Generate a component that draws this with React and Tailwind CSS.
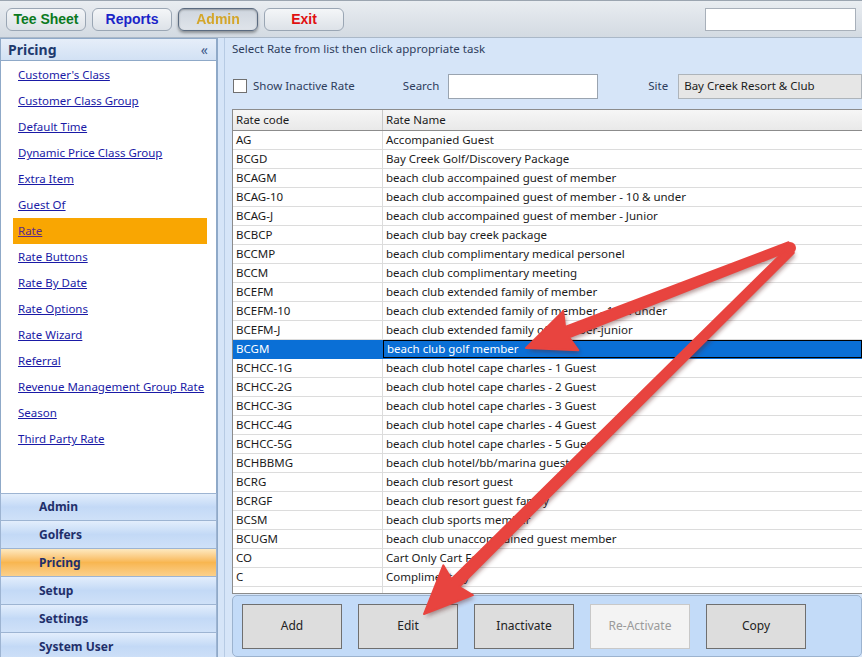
import React from "react";

const rates = [
  ["AG", "Accompanied Guest"],
  ["BCGD", "Bay Creek Golf/Discovery Package"],
  ["BCAGM", "beach club accompained guest of member"],
  ["BCAG-10", "beach club accompained guest of member - 10 & under"],
  ["BCAG-J", "beach club accompained guest of member - Junior"],
  ["BCBCP", "beach club bay creek package"],
  ["BCCMP", "beach club complimentary medical personel"],
  ["BCCM", "beach club complimentary meeting"],
  ["BCEFM", "beach club extended family of member"],
  ["BCEFM-10", "beach club extended family of member - 10 & under"],
  ["BCEFM-J", "beach club extended family of member-junior"],
  ["BCGM", "beach club golf member"],
  ["BCHCC-1G", "beach club hotel cape charles - 1 Guest"],
  ["BCHCC-2G", "beach club hotel cape charles - 2 Guest"],
  ["BCHCC-3G", "beach club hotel cape charles - 3 Guest"],
  ["BCHCC-4G", "beach club hotel cape charles - 4 Guest"],
  ["BCHCC-5G", "beach club hotel cape charles - 5 Guest"],
  ["BCHBBMG", "beach club hotel/bb/marina guest"],
  ["BCRG", "beach club resort guest"],
  ["BCRGF", "beach club resort guest family"],
  ["BCSM", "beach club sports member"],
  ["BCUGM", "beach club unaccompained guest member"],
  ["CO", "Cart Only Cart Fee"],
  ["C", "Complimentary"],
  ["", ""],
];

const links = [
  "Customer's Class",
  "Customer Class Group",
  "Default Time",
  "Dynamic Price Class Group",
  "Extra Item",
  "Guest Of",
  "Rate",
  "Rate Buttons",
  "Rate By Date",
  "Rate Options",
  "Rate Wizard",
  "Referral",
  "Revenue Management Group Rate",
  "Season",
  "Third Party Rate",
];

const sections = ["Admin", "Golfers", "Pricing", "Setup", "Settings", "System User"];

// red annotation arrow, built as a polygon from tail to tip
const arrowPoints = (x1, y1, x2, y2) => {
  const dx = x2 - x1;
  const dy = y2 - y1;
  const len = Math.hypot(dx, dy);
  const ux = dx / len;
  const uy = dy / len;
  const nx = -uy;
  const ny = ux;
  const head = 44;
  const hw = 21;
  const sw = 5.5;
  const tw = 4;
  const bx = x2 - ux * head;
  const by = y2 - uy * head;
  const pts = [
    [x1 + nx * tw, y1 + ny * tw],
    [bx + nx * sw, by + ny * sw],
    [bx + nx * hw - ux * 4, by + ny * hw - uy * 4],
    [x2, y2],
    [bx - nx * hw - ux * 4, by - ny * hw - uy * 4],
    [bx - nx * sw, by - ny * sw],
    [x1 - nx * tw, y1 - ny * tw],
  ];
  return pts.map((p) => p.join(",")).join(" ");
};

const Arrows = () => {
  const a1 = arrowPoints(790, 246, 526, 348);
  const a2 = arrowPoints(791, 250, 424, 614);
  return (
    <svg className="absolute inset-0 pointer-events-none" width="862" height="657" viewBox="0 0 862 657">
      <defs>
        <filter id="sh" x="-20%" y="-20%" width="140%" height="140%">
          <feGaussianBlur stdDeviation="2" />
        </filter>
      </defs>
      <g transform="translate(2,3)" fill="#5a2020" opacity="0.45" filter="url(#sh)">
        <polygon points={a1} />
        <polygon points={a2} />
      </g>
      <g fill="#e8443f" stroke="#e8443f" strokeWidth="2" strokeLinejoin="round">
        <polygon points={a1} />
        <polygon points={a2} />
        <circle cx="790" cy="248" r="5" />
      </g>
    </svg>
  );
};

const TopButton = ({ label, color, pressed }) => (
  <button
    className={`w-[80px] h-[23px] rounded-[6px] border text-[14px] font-bold font-['Liberation_Sans',Arial,sans-serif] ${
      pressed
        ? "border-[#5b6b80] bg-gradient-to-b from-[#cfd6df] to-[#dfe4ea] shadow-[inset_0_1px_2px_rgba(0,0,0,0.3),0_2px_3px_rgba(0,0,0,0.35)]"
        : "border-[#9aa6b4] bg-gradient-to-b from-[#f4f6f8] to-[#dde2e8]"
    }`}
    style={{ color }}
  >
    {pressed ? <span className="blur-[0.6px]">{label}</span> : label}
  </button>
);

const ActionButton = ({ label, disabled }) => (
  <button
    className={`w-[100px] h-[45px] border text-[12px] ${
      disabled ? "bg-[#f3f3f3] border-[#c8c8c8] text-[#9a9a9a]" : "bg-[#dddddd] border-[#6f6f6f] text-[#222]"
    }`}
  >
    {label}
  </button>
);

export default function App() {
  return (
    <div className="relative w-[862px] h-[657px] overflow-hidden bg-[#d6e5f8] font-['Noto_Sans','Open_Sans',sans-serif] text-[11.5px]">
      {/* TOOLBAR */}
      <div className="h-[38px] flex items-center gap-[6px] px-[6px] border-t border-[#9ba5b0] border-b border-b-[#aab8c8] bg-gradient-to-b from-[#e9edf1] to-[#d3dae2]">
        <TopButton label="Tee Sheet" color="#0b7a1e" />
        <TopButton label="Reports" color="#1a24c8" />
        <TopButton label="Admin" color="#d4a62a" pressed />
        <TopButton label="Exit" color="#e01010" />
        <div className="ml-auto w-[151px] h-[23px] bg-white border border-[#a8b0ba]" />
      </div>

      <div className="flex h-[619px]">
        {/* LEFT PANEL */}
        <div className="w-[218px] flex flex-col border-r border-[#8fa9c8]">
          <div className="h-[24px] flex items-center justify-between pl-[7px] pr-[8px] border border-[#8fa9c8] bg-gradient-to-b from-[#e6eef9] to-[#d2e1f4]">
            <span className="text-[14px] font-bold text-[#1e3a6e]">Pricing</span>
            <span className="text-[14px] text-[#3c5a8a] leading-none">«</span>
          </div>
          <div className="h-[432px] shrink-0 bg-white border-x border-[#8fa9c8] pt-[1px] flex flex-col text-[11.5px]">
            {links.map((l) => (
              <div
                key={l}
                className={`h-[26px] shrink-0 flex items-center ml-[12px] mr-[9px] pl-[5px] ${l === "Rate" ? "bg-[#f9a602]" : ""}`}
              >
                <span className={`underline ${l === "Rate" ? "text-[#5a2a8a]" : "text-[#1a1aa6]"}`}>{l}</span>
              </div>
            ))}
          </div>
          <div className="flex flex-col">
            {sections.map((s) => (
              <div
                key={s}
                className={`h-[28px] shrink-0 flex items-center pl-[38px] border border-t-0 border-[#9db4d2] first:border-t font-bold text-[12px] text-[#1f2f6a] ${
                  s === "Pricing"
                    ? "bg-gradient-to-b from-[#fde9c0] via-[#f8b650] to-[#fbd08a]"
                    : "bg-gradient-to-b from-[#e3eefc] via-[#c3d9f6] to-[#cfe1f8]"
                }`}
              >
                {s}
              </div>
            ))}
          </div>
        </div>

        {/* SPLITTER */}
        <div className="w-[7px] bg-[#d6e5f8] border-r border-[#b7cbe4]" />

        {/* RIGHT PANEL */}
        <div className="flex-1 flex flex-col pl-[7px] text-[#1d2a44]">
          <div className="h-[21px] flex items-center text-[#2e3d5c]">Select Rate from list then click appropriate task</div>
          <div className="h-[50px] flex items-center pt-[4px]">
            <div className="w-[14px] h-[14px] bg-white border border-[#707070] ml-[1px]" />
            <span className="ml-[6px] text-[#2e3d5c]">Show Inactive Rate</span>
            <span className="ml-[48px] text-[#2e3d5c]">Search</span>
            <div className="ml-[9px] w-[150px] h-[25px] bg-white border border-[#9aa4b0]" />
            <span className="ml-[50px] text-[#2e3d5c]">Site</span>
            <div className="ml-[10px] flex-1 h-[25px] flex items-center pl-[5px] bg-[#e6e6e6] border border-[#aeb4ba] text-[#1b1b1b]">
              Bay Creek Resort &amp; Club
            </div>
          </div>

          {/* TABLE */}
          <div className="h-[485px] bg-white border border-[#8c8c8c] border-r-0 overflow-hidden">
            <div className="h-[21px] flex border-b border-[#8c8c8c] bg-gradient-to-b from-[#f6f6f6] to-[#e9e9e9] text-[#1b1b1b]">
              <div className="w-[150px] flex items-center pl-[3px] border-r border-[#c8c8c8]">Rate code</div>
              <div className="flex-1 flex items-center pl-[3px]">Rate Name</div>
            </div>
            {rates.map(([code, name], i) => {
              const sel = code === "BCGM";
              return (
                <div
                  key={i}
                  className={`h-[19px] flex border-b ${sel ? "bg-[#0a6fd6] text-white border-[#0a6fd6]" : "border-[#dcdcdc] text-[#1b1b1b]"}`}
                >
                  <div className={`w-[150px] flex items-center pl-[3px] border-r ${sel ? "border-[#0a6fd6]" : "border-[#dcdcdc]"}`}>{code}</div>
                  <div className={`flex-1 flex items-center pl-[3px] ${sel ? "border border-black" : ""}`}>{name}</div>
                </div>
              );
            })}
          </div>

          {/* BUTTON BAR */}
          <div className="flex-1 mt-[1px] flex items-center gap-[16px] pl-[9px] rounded-[5px] border border-[#9cb3cf] bg-[#c3dbf8]">
            <ActionButton label="Add" />
            <ActionButton label="Edit" />
            <ActionButton label="Inactivate" />
            <ActionButton label="Re-Activate" disabled />
            <ActionButton label="Copy" />
          </div>
        </div>
      </div>

      <Arrows />
    </div>
  );
}
